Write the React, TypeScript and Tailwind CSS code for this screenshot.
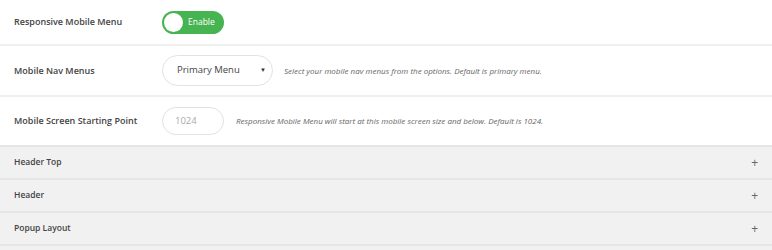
import React from 'react';

const SECTIONS = ['Header Top', 'Header', 'Popup Layout'];

function Row({ label, children, border = true }: { label: string; children: React.ReactNode; border?: boolean }) {
  return (
    <div className={`flex items-center px-[14px] bg-white ${border ? 'border-b-2 border-[#f0f0f0]' : ''}`}>
      <div className="w-[148px] shrink-0 text-[9px] font-semibold text-[#444]">{label}</div>
      {children}
    </div>
  );
}

export default function App() {
  return (
    <div className="w-[772px] h-[250px] overflow-hidden bg-white" style={{ fontFamily: '"Open Sans", sans-serif' }}>
      {/* Toggle */}
      <Row label="Responsive Mobile Menu">
        <div className="h-[44px] flex items-center">
          <div className="flex items-center w-[62px] h-[23px] rounded-full bg-[#46b450] pl-[2px]">
            <span className="w-[19px] h-[19px] rounded-full bg-white" />
            <span className="ml-[5px] text-[8.5px] text-white">Enable</span>
          </div>
        </div>
      </Row>

      {/* Select */}
      <Row label="Mobile Nav Menus">
        <div className="h-[49px] flex items-center">
          <div className="flex items-center justify-between w-[111px] h-[31px] rounded-[16px] border border-[#e2e2e2] pl-[14px] pr-[6px]">
            <span className="text-[9.5px] text-[#444]">Primary Menu</span>
            <span className="text-[6px] text-[#333]">▼</span>
          </div>
          <p className="ml-[11px] text-[8px] italic text-[#666]">
            Select your mobile nav menus from the options. Default is primary menu.
          </p>
        </div>
      </Row>

      {/* Input */}
      <Row label="Mobile Screen Starting Point" border={false}>
        <div className="h-[48px] flex items-center">
          <div className="flex items-center w-[62px] h-[28px] rounded-[14px] border border-[#e2e2e2] pl-[12px]">
            <span className="text-[9.5px] text-[#aaa]">1024</span>
          </div>
          <p className="ml-[12px] text-[8px] italic text-[#666]">
            Responsive Mobile Menu will start at this mobile screen size and below. Default is 1024.
          </p>
        </div>
      </Row>

      {/* Collapsed sections */}
      <div className="border-t-2 border-[#e6e6e6]">
        {SECTIONS.map((s) => (
          <div
            key={s}
            className="flex items-center justify-between h-[33px] pl-[14px] pr-[14px] bg-[#f1f1f1] border-b-2 border-[#e6e6e6]"
          >
            <span className="text-[8.5px] font-semibold text-[#444]">{s}</span>
            <span className="text-[12px] text-[#666]">+</span>
          </div>
        ))}
        <div className="h-[33px] bg-[#f1f1f1]" />
      </div>
    </div>
  );
}
